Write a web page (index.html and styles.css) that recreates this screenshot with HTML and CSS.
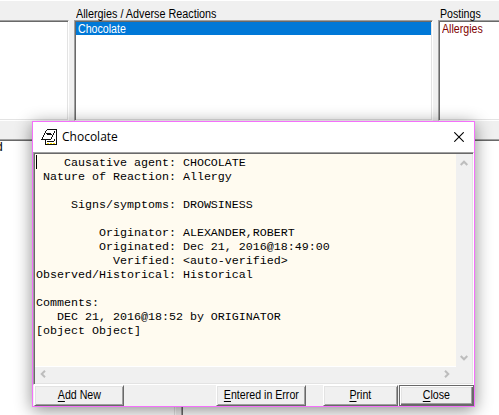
FILE: index.html
```html
<!DOCTYPE html>
<html lang="en">
<head>
<meta charset="utf-8">
<title>Allergies</title>
<link rel="stylesheet" href="styles.css">
</head>
<body>
<main class="app">
  <section class="top">
    <div class="col"><div class="label"></div><div class="box first"></div></div>
    <div class="col"><div class="label"><span class="t-all">Allergies / Adverse Reactions</span></div><div class="box"><div class="row selected"><span>Chocolate</span></div></div></div>
    <div class="col"><div class="label"><span>Postings</span></div><div class="box last"><div class="row posting"><span>Allergies</span></div></div></div>
  </section>
  <section class="bottom">
    <div class="box first"><div class="cut"><span>d</span></div></div>
    <div class="box last"></div>
  </section>
</main>
<div class="dialog">
  <header class="title">
    <svg class="icon" width="17" height="17" viewBox="0 0 17 17" shape-rendering="crispEdges">
      <path d="M6 0h10v1H6zM15 1h1v15h-1zM4 15h12v1H4zM5 1h1v1H5zM4 2h1v2H4zM3 4h1v2H3zM2 6h1v2H2zM1 8h1v2H1zM0 10h10v1H0zM13 2h1v2h-1zM12 4h1v2h-1zM11 6h1v2h-1zM10 8h1v2h-1zM5 4h5v1H5zM6 5h5v1H6zM4 11h1v4H4zM6 12h7v1H6zM13 10h1v2h-1z" fill="#111"/>
      <path d="M6 14h2v1H6zM9 14h2v1H9zM12 14h2v1h-2z" fill="#ffe000"/>
    </svg>
    <span class="caption">Chocolate</span>
    <svg width="10" height="10" viewBox="0 0 10 10"><path d="M.3.3l9.4 9.4M9.7.3L.3 9.7" stroke="#000" stroke-width="1.1"/></svg>
  </header>
  <div class="memo">
    <pre class="text">    Causative agent: CHOCOLATE
 Nature of Reaction: Allergy

     Signs/symptoms: DROWSINESS

         Originator: ALEXANDER,ROBERT
         Originated: Dec 21, 2016@18:49:00
           Verified: &lt;auto-verified&gt;
Observed/Historical: Historical

Comments:
   DEC 21, 2016@18:52 by ORIGINATOR
[object Object]</pre>
    <div class="vbar">
      <svg width="8" height="6" viewBox="0 0 8 6"><path d="M.7 5L4 1.7 7.3 5" /></svg>
      <svg width="8" height="6" viewBox="0 0 8 6"><path d="M.7 1L4 4.3 7.3 1" /></svg>
    </div>
    <div class="hbar">
      <svg width="6" height="8" viewBox="0 0 6 8"><path d="M5 .7L1.7 4 5 7.3" /></svg>
      <svg width="6" height="8" viewBox="0 0 6 8"><path d="M1 .7L4.3 4 1 7.3" /></svg>
    </div>
  </div>
  <footer class="buttons">
    <div class="btn add"><span><u>A</u>dd New</span></div>
    <div class="btn err"><span><u>E</u>ntered in Error</span></div>
    <div class="btn print"><span><u>P</u>rint</span></div>
    <div class="btn close"><span><u>C</u>lose</span></div>
  </footer>
</div>
</body>
</html>
```
FILE: styles.css
```css
* { box-sizing: border-box; }
body { margin: 0; width: 499px; height: 415px; overflow: hidden; background: #f0f0f0; font: 12px/13px "Liberation Sans", Arial, sans-serif; color: #000; }
.app { height: 415px; display: flex; flex-direction: column; gap: 18px; border-top: 1px solid #fff; }
.top { display: grid; grid-template-columns: 69px 359px 61px; column-gap: 5px; }
.label { height: 19px; padding: 7px 0 0 2px; white-space: nowrap; }
.label span, .row span, .btn span { display: inline-block; transform: scaleX(.885); transform-origin: left; }
.label .t-all { transform: scaleX(.9); }
.box { height: 101px; background: #fff; border: 1px solid; border-color: #a0a0a0 #fff #fff #a0a0a0; box-shadow: inset 1px 1px #696969, inset -1px -1px #e3e3e3; padding: 1px; }
.box.first { border-left: 0; box-shadow: inset 0 1px #696969, inset -1px -1px #e3e3e3; }
.box.last { border-right: 0; box-shadow: inset 1px 1px #696969, inset 0 -1px #e3e3e3; }
.row { height: 13px; line-height: 14px; padding-left: 2px; white-space: nowrap; }
.selected { background: #0078d7; color: #fff; }
.posting { color: #800000; }
.bottom { flex: 1; display: grid; grid-template-columns: 176px 318px; column-gap: 5px; }
.bottom .box { height: 290px; }
.cut { margin-left: -5px; }
.dialog { position: absolute; left: 32px; top: 121px; width: 443px; height: 286px; border: 1px solid #f470fb; background: #f0f0f0; box-shadow: 0 3px 16px rgba(0,0,0,.46); display: flex; flex-direction: column; }
.title { height: 30px; background: #fff; display: flex; align-items: center; padding: 0 10px 0 8px; }
.icon { flex: none; }
.caption { flex: 1; margin-left: 4px; font: 12px/16px "Open Sans", sans-serif; }
.memo { height: 233px; border: 1px solid; border-color: #a0a0a0 #fff #fff #a0a0a0; box-shadow: inset 1px 1px #696969, inset -1px -1px #e3e3e3; padding: 1px; display: grid; grid-template-columns: 421px 16px; grid-template-rows: 213px 16px; }
.text { margin: 0; padding: 2px 0 0 1px; background: linear-gradient(#000, #000) 1px 1px / 1px 14px no-repeat, #fffbf0; font: 11.67px/14px "Liberation Mono", monospace; border-bottom: 1px solid #fff; }
.vbar { display: flex; flex-direction: column; align-items: center; justify-content: space-between; padding: 6px 1px 6px 0; }
.hbar { display: flex; align-items: center; justify-content: space-between; padding: 0 6px 2px 5px; }
.vbar path, .hbar path { fill: none; stroke: #bdbdbd; stroke-width: 2; }
.buttons { display: grid; grid-template-columns: 90px 92px 90px 17px 75px 1px 75px; padding-left: 1px; flex: 1; }
.btn { height: 21px; border: 1px solid; border-color: #fff #696969 #696969 #fff; box-shadow: inset 1px 1px #e3e3e3, inset -1px -1px #a0a0a0; text-align: center; line-height: 18px; white-space: nowrap; }
.btn span { transform-origin: center; }
.add { grid-column: 1; }
.err { grid-column: 3; }
.print { grid-column: 5; }
.close { grid-column: 7; border-color: #696969; box-shadow: inset 1px 1px #fff, inset -1px -1px #696969, inset -2px -2px #a0a0a0, inset 2px 2px #e3e3e3; }
u { text-underline-offset: 2px; text-decoration-skip-ink: none; }
```
